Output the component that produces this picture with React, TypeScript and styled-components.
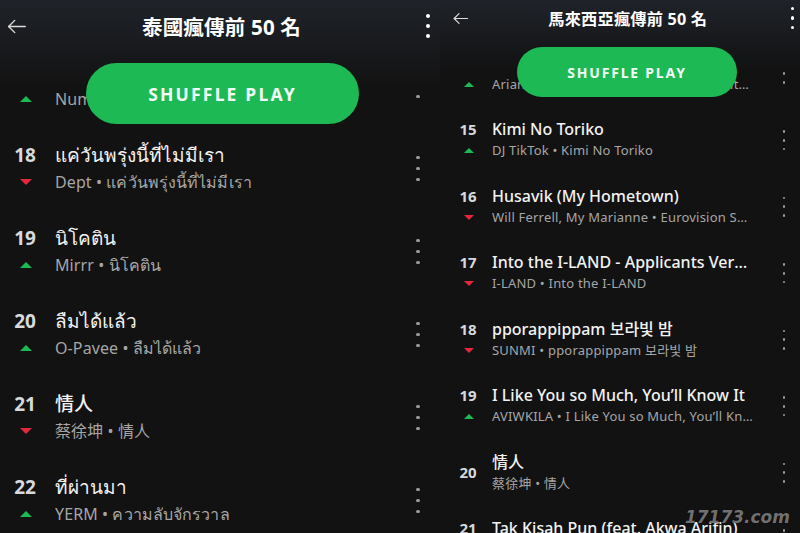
import React from 'react';
import styled, { createGlobalStyle } from 'styled-components';

const GlobalStyle = createGlobalStyle`
  html, body { margin: 0; padding: 0; background: #121212; }
  body { font-family: "Noto Sans", "Noto Sans CJK TC", "Noto Sans CJK KR", sans-serif; }
`;

type Metrics = {
  width: number;
  headH: number;
  topRowH: number;
  headPadL: number;
  headPadR: number;
  arrow: number;
  headTitle: number;
  titleNudge: number;
  headDot: number;
  headDotGap: number;
  btnLeft: number;
  btnTop: number;
  btnW: number;
  btnH: number;
  btnFont: number;
  btnSpacing: number;
  listShift: number;
  rowH: number;
  lineH: number;
  numCol: number;
  numPadL: number;
  numPadR: number;
  numSize: number;
  titleSize: number;
  subSize: number;
  subSpacing: number;
  contentW: number;
  tri: number;
  dot: number;
  dotGap: number;
  kebabW: number;
};

type Track = {
  n: number;
  move?: 'up' | 'down';
  title: string;
  sub: string;
};

const thai: Metrics = {
  width: 440, headH: 88, topRowH: 52, headPadL: 6, headPadR: 10, arrow: 21,
  headTitle: 20.5, titleNudge: 10, headDot: 4, headDotGap: 6,
  btnLeft: 86, btnTop: 63, btnW: 273, btnH: 61, btnFont: 17.5, btnSpacing: 2.2,
  listShift: -44, rowH: 83, lineH: 27,
  numCol: 55, numPadL: 0, numPadR: 5, numSize: 19,
  titleSize: 19, subSize: 16, subSpacing: 0.1, contentW: 340,
  tri: 6, dot: 3.2, dotGap: 8, kebabW: 44,
};

const malay: Metrics = {
  width: 360, headH: 70, topRowH: 36, headPadL: 12, headPadR: 6, arrow: 17,
  headTitle: 16.2, titleNudge: 4, headDot: 3.5, headDotGap: 6,
  btnLeft: 77, btnTop: 47, btnW: 220, btnH: 50, btnFont: 14, btnSpacing: 1.8,
  listShift: -29.5, rowH: 66.5, lineH: 21,
  numCol: 52, numPadL: 4, numPadR: 0, numSize: 15,
  titleSize: 16, subSize: 13, subSpacing: 0.2, contentW: 262,
  tri: 5, dot: 2.6, dotGap: 6, kebabW: 32,
};

const thaiTracks: Track[] = [
  { n: 17, move: 'up', title: 'ฝนตกไหม', sub: 'Num Kala • ฝนตกไหม' },
  { n: 18, move: 'down', title: 'แค่วันพรุ่งนี้ที่ไม่มีเรา', sub: 'Dept • แค่วันพรุ่งนี้ที่ไม่มีเรา' },
  { n: 19, move: 'up', title: 'นิโคติน', sub: 'Mirrr • นิโคติน' },
  { n: 20, move: 'up', title: 'ลืมได้แล้ว', sub: 'O-Pavee • ลืมได้แล้ว' },
  { n: 21, move: 'down', title: '情人', sub: '蔡徐坤 • 情人' },
  { n: 22, move: 'up', title: 'ที่ผ่านมา', sub: 'YERM • ความลับจักรวาล' },
];

const malayTracks: Track[] = [
  { n: 14, move: 'up', title: 'Stuck with U', sub: 'Ariana Grande, Justin Bieber • Stuck with U (with Justin Bieber)' },
  { n: 15, move: 'up', title: 'Kimi No Toriko', sub: 'DJ TikTok • Kimi No Toriko' },
  { n: 16, move: 'down', title: 'Husavik (My Hometown)', sub: 'Will Ferrell, My Marianne • Eurovision Song Contest: The Story of Fire Saga' },
  { n: 17, move: 'down', title: 'Into the I-LAND - Applicants Version', sub: 'I-LAND • Into the I-LAND' },
  { n: 18, move: 'down', title: 'pporappippam 보라빛 밤', sub: 'SUNMI • pporappippam 보라빛 밤' },
  { n: 19, move: 'up', title: 'I Like You so Much, You’ll Know It', sub: 'AVIWKILA • I Like You so Much, You’ll Know It' },
  { n: 20, title: '情人', sub: '蔡徐坤 • 情人' },
  { n: 21, move: 'up', title: 'Tak Kisah Pun (feat. Akwa Arifin)', sub: 'Sufian Suhaimi • Tak Kisah Pun' },
];

const Screen = styled.div`
  position: relative;
  display: flex;
  width: 800px;
  height: 533px;
  overflow: hidden;
  background: #121212;
`;

const Phone = styled.section<{ $m: Metrics }>`
  position: relative;
  display: flex;
  flex-direction: column;
  width: ${p => p.$m.width}px;
  height: 100%;
  flex-shrink: 0;
  overflow: hidden;
  background: #121212;
`;

const Header = styled.header<{ $m: Metrics }>`
  height: ${p => p.$m.headH}px;
  flex-shrink: 0;
  background: linear-gradient(180deg, #1f2329 0%, #191b1f 45%, #121212 100%);
`;

const TopRow = styled.div<{ $m: Metrics }>`
  display: flex;
  align-items: center;
  height: ${p => p.$m.topRowH}px;
  padding: 0 ${p => p.$m.headPadR}px 0 ${p => p.$m.headPadL}px;
  color: #fff;
`;

const BackIcon = styled.svg<{ $m: Metrics }>`
  width: ${p => p.$m.arrow}px;
  height: ${p => p.$m.arrow}px;
  flex-shrink: 0;
  color: #dcdcdc;
`;

const HeadTitle = styled.h1<{ $m: Metrics }>`
  flex: 1;
  margin: 0;
  padding-right: ${p => p.$m.titleNudge}px;
  text-align: center;
  font-size: ${p => p.$m.headTitle}px;
  font-weight: 700;
  color: #ffffff;
  letter-spacing: 0.2px;
`;

const Kebab = styled.div<{ $size: number; $gap: number; $color: string; $w?: number }>`
  display: flex;
  flex-direction: column;
  align-items: center;
  justify-content: center;
  gap: ${p => p.$gap}px;
  width: ${p => (p.$w ? `${p.$w}px` : 'auto')};
  span {
    display: block;
    width: ${p => p.$size}px;
    height: ${p => p.$size}px;
    border-radius: 50%;
    background: ${p => p.$color};
  }
`;

const ShuffleButton = styled.button<{ $m: Metrics }>`
  position: absolute;
  left: ${p => p.$m.btnLeft}px;
  top: ${p => p.$m.btnTop}px;
  width: ${p => p.$m.btnW}px;
  height: ${p => p.$m.btnH}px;
  border: none;
  border-radius: ${p => p.$m.btnH / 2}px;
  background: #1db954;
  color: #f4fff7;
  font-family: "Noto Sans", sans-serif;
  font-size: ${p => p.$m.btnFont}px;
  font-weight: 700;
  letter-spacing: ${p => p.$m.btnSpacing}px;
  padding: 0;
  z-index: 2;
`;

const ListViewport = styled.div`
  flex: 1;
  overflow: hidden;
`;

const List = styled.ol<{ $m: Metrics }>`
  list-style: none;
  margin: ${p => p.$m.listShift}px 0 0;
  padding: 0;
`;

const Row = styled.li<{ $m: Metrics }>`
  display: grid;
  grid-template-columns: ${p => p.$m.numCol}px ${p => p.$m.contentW}px 1fr;
  grid-template-rows: ${p => p.$m.lineH}px ${p => p.$m.lineH}px;
  align-content: center;
  height: ${p => p.$m.rowH}px;
`;

const Num = styled.div<{ $m: Metrics; $solo: boolean }>`
  grid-column: 1;
  grid-row: ${p => (p.$solo ? '1 / 3' : '1')};
  align-self: center;
  text-align: center;
  padding: 0 ${p => p.$m.numPadR}px 0 ${p => p.$m.numPadL}px;
  font-size: ${p => p.$m.numSize}px;
  font-weight: 700;
  color: #d8d9dc;
  line-height: 1;
`;

const Move = styled.div<{ $m: Metrics; $dir: 'up' | 'down' }>`
  grid-column: 1;
  grid-row: 2;
  justify-self: center;
  align-self: center;
  margin-left: ${p => p.$m.numPadL - p.$m.numPadR + 1}px;
  width: 0;
  height: 0;
  border-left: ${p => p.$m.tri}px solid transparent;
  border-right: ${p => p.$m.tri}px solid transparent;
  ${p =>
    p.$dir === 'up'
      ? `border-bottom: ${p.$m.tri}px solid #1db954;`
      : `border-top: ${p.$m.tri}px solid #e3283e;`}
`;

const Title = styled.div<{ $m: Metrics }>`
  grid-column: 2;
  grid-row: 1;
  align-self: center;
  font-size: ${p => p.$m.titleSize}px;
  font-weight: 500;
  line-height: ${p => p.$m.lineH}px;
  color: #f2f2f2;
  white-space: nowrap;
  overflow: hidden;
  text-overflow: ellipsis;
`;

const Sub = styled.div<{ $m: Metrics }>`
  grid-column: 2;
  grid-row: 2;
  align-self: center;
  font-size: ${p => p.$m.subSize}px;
  letter-spacing: ${p => p.$m.subSpacing}px;
  line-height: ${p => p.$m.lineH}px;
  color: #a6a6a6;
  white-space: nowrap;
  overflow: hidden;
  text-overflow: ellipsis;
`;

const RowMenu = styled.div`
  grid-column: 3;
  grid-row: 1 / 3;
  justify-self: end;
  align-self: center;
`;

const Watermark = styled.div`
  position: absolute;
  right: 10px;
  bottom: 6px;
  font-family: "DejaVu Sans", sans-serif;
  font-size: 17px;
  font-weight: 700;
  font-style: italic;
  letter-spacing: 0;
  color: rgba(190, 190, 190, 0.6);
  text-shadow: 0 0 1px #000;
  z-index: 5;
`;

const Dots = ({ size, gap, color, w }: { size: number; gap: number; color: string; w?: number }) => (
  <Kebab $size={size} $gap={gap} $color={color} $w={w}>
    <span />
    <span />
    <span />
  </Kebab>
);

const Chart = ({ m, title, tracks }: { m: Metrics; title: string; tracks: Track[] }) => (
  <Phone $m={m}>
    <Header $m={m}>
      <TopRow $m={m}>
        <BackIcon $m={m} viewBox="0 0 24 24" fill="none" stroke="currentColor" strokeWidth="1.6" strokeLinecap="round" strokeLinejoin="round">
          <path d="M22 12H3" />
          <path d="M10 5l-7 7 7 7" />
        </BackIcon>
        <HeadTitle $m={m}>{title}</HeadTitle>
        <Dots size={m.headDot} gap={m.headDotGap} color="#ffffff" />
      </TopRow>
    </Header>
    <ShuffleButton $m={m}>SHUFFLE PLAY</ShuffleButton>
    <ListViewport>
      <List $m={m}>
        {tracks.map(t => (
          <Row $m={m} key={t.n}>
            <Num $m={m} $solo={!t.move}>{t.n}</Num>
            {t.move && <Move $m={m} $dir={t.move} />}
            <Title $m={m}>{t.title}</Title>
            <Sub $m={m}>{t.sub}</Sub>
            <RowMenu>
              <Dots size={m.dot} gap={m.dotGap} color="#9b9b9b" w={m.kebabW} />
            </RowMenu>
          </Row>
        ))}
      </List>
    </ListViewport>
  </Phone>
);

export default function App() {
  return (
    <>
      <GlobalStyle />
      <Screen>
        <Chart m={thai} title="泰國瘋傳前 50 名" tracks={thaiTracks} />
        <Chart m={malay} title="馬來西亞瘋傳前 50 名" tracks={malayTracks} />
        <Watermark>17173.com</Watermark>
      </Screen>
    </>
  );
}
